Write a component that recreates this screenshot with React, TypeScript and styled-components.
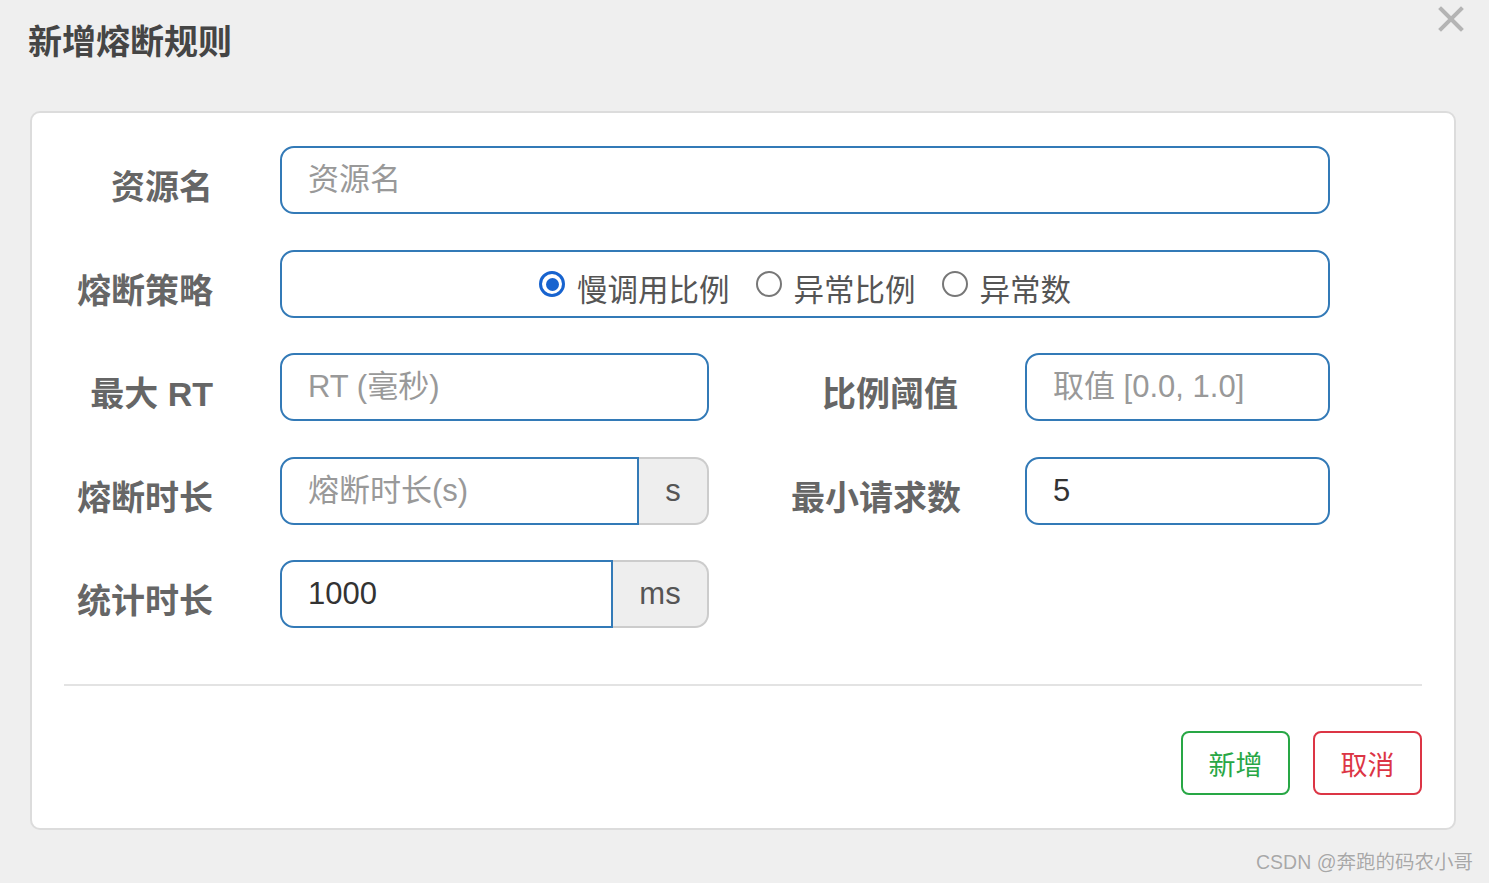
import styled, { createGlobalStyle } from "styled-components";

const GlobalStyle = createGlobalStyle`
  html, body {
    margin: 0;
    padding: 0;
    background: #efefef;
    font-family: "Liberation Sans", "Noto Sans CJK SC", sans-serif;
  }
  * {
    box-sizing: border-box;
  }
`;

const Page = styled.div`
  width: 1489px;
  height: 883px;
  overflow: hidden;
`;

const Header = styled.div`
  display: flex;
  justify-content: space-between;
  align-items: flex-start;
  height: 111px;
  padding: 0 25px 0 28px;
`;

const Title = styled.h4`
  margin: 0;
  padding-top: 20px;
  font-size: 34px;
  line-height: 44px;
  font-weight: bold;
  color: #454545;
`;

const CloseButton = styled.button`
  margin-top: 6px;
  padding: 0;
  border: none;
  background: none;
  width: 26px;
  height: 26px;
  cursor: pointer;
`;

const Card = styled.div`
  margin: 0 33px 0 30px;
  background: #fff;
  border: 2px solid #dcdcdc;
  border-radius: 10px;
  padding: 33px 32px;
`;

const Row = styled.div`
  display: flex;
  align-items: center;
  height: 68px;
  margin-bottom: 35.5px;
  &:last-of-type {
    margin-bottom: 0;
  }
`;

const Label = styled.label<{ $width: number; $gap: number }>`
  width: ${(p) => p.$width}px;
  margin-right: ${(p) => p.$gap}px;
  flex-shrink: 0;
  padding-top: 9px;
  text-align: right;
  font-size: 34px;
  font-weight: bold;
  color: #666;
  white-space: nowrap;
`;

const TextInput = styled.input<{ $width: number; $attached?: boolean }>`
  width: ${(p) => p.$width}px;
  height: 68px;
  flex-shrink: 0;
  border: 2px solid #337ab7;
  border-radius: ${(p) => (p.$attached ? "14px 0 0 14px" : "14px")};
  padding: 0 26px;
  font-family: "Liberation Sans", "Noto Sans CJK SC", sans-serif;
  font-size: 31px;
  color: #333;
  background: #fff;
  outline: none;
  &::placeholder {
    color: #999;
  }
`;

const InputGroup = styled.div`
  display: flex;
  width: 429px;
`;

const Addon = styled.span<{ $width: number }>`
  width: ${(p) => p.$width}px;
  height: 68px;
  display: flex;
  align-items: center;
  justify-content: center;
  background: #eee;
  border: 2px solid #ccc;
  border-left: none;
  border-radius: 0 14px 14px 0;
  font-size: 31px;
  color: #555;
`;

const RadioBox = styled.div`
  width: 1050px;
  height: 68px;
  border: 2px solid #337ab7;
  border-radius: 14px;
  display: flex;
  align-items: center;
  justify-content: center;
  gap: 26px;
  padding-top: 8px;
`;

const RadioOption = styled.label`
  display: flex;
  align-items: center;
  gap: 12px;
  font-size: 30.5px;
  color: #555;
`;

const RadioDot = styled.span<{ $checked?: boolean }>`
  width: 26px;
  height: 26px;
  margin-top: -7px;
  border-radius: 50%;
  border: ${(p) => (p.$checked ? "3px solid #1763cf" : "2px solid #777")};
  display: flex;
  align-items: center;
  justify-content: center;
  &::after {
    content: "";
    display: ${(p) => (p.$checked ? "block" : "none")};
    width: 13px;
    height: 13px;
    border-radius: 50%;
    background: #1763cf;
  }
`;

const Divider = styled.hr`
  margin: 56px 0 45px;
  border: none;
  border-top: 2px solid #e3e3e3;
`;

const Footer = styled.div`
  display: flex;
  justify-content: flex-end;
  gap: 23px;
`;

const OutlineButton = styled.button<{ $color: string }>`
  width: 109px;
  height: 64px;
  background: #fff;
  border: 2px solid ${(p) => p.$color};
  border-radius: 8px;
  color: ${(p) => p.$color};
  font-family: "Liberation Sans", "Noto Sans CJK SC", sans-serif;
  font-size: 27px;
  cursor: pointer;
`;

const Watermark = styled.div`
  margin-top: 20px;
  padding-right: 16px;
  text-align: right;
  font-size: 19.5px;
  line-height: 24px;
  color: #a8a8a8;
  text-shadow: 0 0 1px #fff;
`;

const strategies = [
  { name: "慢调用比例", checked: true },
  { name: "异常比例", checked: false },
  { name: "异常数", checked: false },
];

function App() {
  return (
    <Page>
      <GlobalStyle />
      <Header>
        <Title>新增熔断规则</Title>
        <CloseButton aria-label="close">
          <svg width="26" height="26" viewBox="0 0 26 26">
            <path
              d="M3 3 L23 23 M23 3 L3 23"
              stroke="#b4b4b4"
              strokeWidth="4"
              strokeLinecap="square"
            />
          </svg>
        </CloseButton>
      </Header>
      <Card>
        <Row>
          <Label $width={149} $gap={67}>资源名</Label>
          <TextInput $width={1050} placeholder="资源名" />
        </Row>
        <Row>
          <Label $width={149} $gap={67}>熔断策略</Label>
          <RadioBox>
            {strategies.map((s) => (
              <RadioOption key={s.name}>
                <RadioDot $checked={s.checked} />
                {s.name}
              </RadioOption>
            ))}
          </RadioBox>
        </Row>
        <Row>
          <Label $width={149} $gap={67}>最大 RT</Label>
          <TextInput $width={429} placeholder="RT (毫秒)" />
          <Label $width={249} $gap={67}>比例阈值</Label>
          <TextInput $width={305} placeholder="取值 [0.0, 1.0]" />
        </Row>
        <Row>
          <Label $width={149} $gap={67}>熔断时长</Label>
          <InputGroup>
            <TextInput $width={359} $attached placeholder="熔断时长(s)" />
            <Addon $width={70}>s</Addon>
          </InputGroup>
          <Label $width={252} $gap={64}>最小请求数</Label>
          <TextInput $width={305} defaultValue="5" />
        </Row>
        <Row>
          <Label $width={149} $gap={67}>统计时长</Label>
          <InputGroup>
            <TextInput $width={333} $attached defaultValue="1000" />
            <Addon $width={96}>ms</Addon>
          </InputGroup>
        </Row>
        <Divider />
        <Footer>
          <OutlineButton $color="#28a745">新增</OutlineButton>
          <OutlineButton $color="#dc3545">取消</OutlineButton>
        </Footer>
      </Card>
      <Watermark>CSDN @奔跑的码农小哥</Watermark>
    </Page>
  );
}

export default App;
